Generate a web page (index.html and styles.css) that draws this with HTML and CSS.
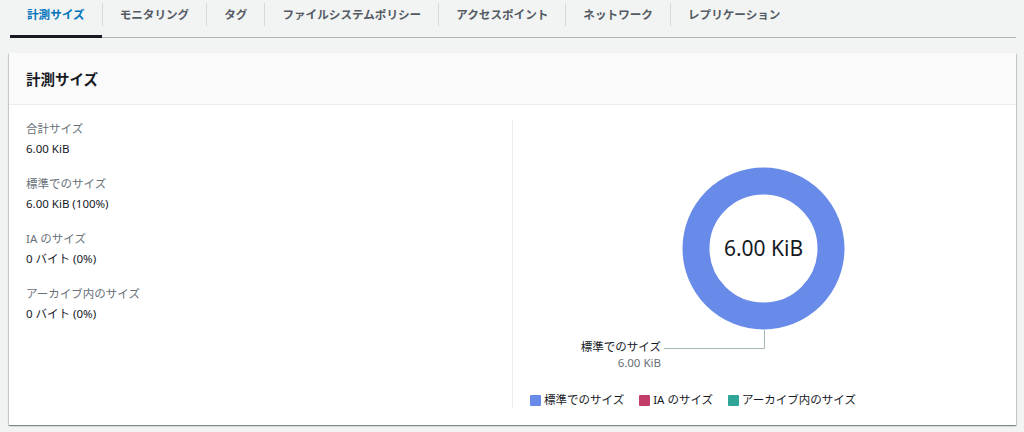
FILE: index.html
```html
<!DOCTYPE html>
<html lang="ja">
<head>
<meta charset="utf-8">
<title>計測サイズ</title>
<link rel="stylesheet" href="styles.css">
</head>
<body>
<div class="page">
  <nav class="tabs">
    <a class="tab active">計測サイズ</a>
    <span class="sep"></span>
    <a class="tab">モニタリング</a>
    <span class="sep"></span>
    <a class="tab">タグ</a>
    <span class="sep"></span>
    <a class="tab">ファイルシステムポリシー</a>
    <span class="sep"></span>
    <a class="tab">アクセスポイント</a>
    <span class="sep"></span>
    <a class="tab">ネットワーク</a>
    <span class="sep"></span>
    <a class="tab">レプリケーション</a>
  </nav>

  <section class="card">
    <header class="card-header"><h2>計測サイズ</h2></header>
    <div class="card-body">
      <div class="stats">
        <div class="stat">
          <div class="label">合計サイズ</div>
          <div class="value">6.00 KiB</div>
        </div>
        <div class="stat">
          <div class="label">標準でのサイズ</div>
          <div class="value">6.00 KiB (100%)</div>
        </div>
        <div class="stat">
          <div class="label">IA のサイズ</div>
          <div class="value">0 バイト (0%)</div>
        </div>
        <div class="stat">
          <div class="label">アーカイブ内のサイズ</div>
          <div class="value">0 バイト (0%)</div>
        </div>
      </div>
      <div class="chart">
        <svg class="donut" width="502" height="256" viewBox="0 0 502 256">
          <circle cx="250.5" cy="128.5" r="67.5" fill="none" stroke="#688ae8" stroke-width="27"/>
          <text x="250.5" y="136" text-anchor="middle" class="center-text">6.00 KiB</text>
          <path d="M251.5 210 V228.5 H151" fill="none" stroke="#aab7b8" stroke-width="1"/>
          <text x="148" y="231" text-anchor="end" class="lbl-title">標準でのサイズ</text>
          <text x="148" y="247" text-anchor="end" class="lbl-value">6.00 KiB</text>
        </svg>
        <ul class="legend">
          <li><span class="swatch std"></span>標準でのサイズ</li>
          <li><span class="swatch ia"></span>IA のサイズ</li>
          <li><span class="swatch arc"></span>アーカイブ内のサイズ</li>
        </ul>
      </div>
    </div>
  </section>
</div>
</body>
</html>
```

FILE: styles.css
```css
html, body {
  margin: 0;
  padding: 0;
  background: #f2f3f3;
  font-family: "Noto Sans", "Noto Sans CJK JP", sans-serif;
  color: #16191f;
}

.page {
  width: 1024px;
  height: 432px;
  overflow: hidden;
}

.tabs {
  display: flex;
  margin: 0 8px 0 10px;
  height: 37px;
  border-bottom: 1px solid #aab7b8;
}

.tab {
  box-sizing: border-box;
  height: 37px;
  padding: 6px 17px 0;
  font-size: 11.6px;
  line-height: 18px;
  font-weight: 700;
  color: #545b64;
  white-space: nowrap;
}

.tab.active {
  color: #0073bb;
  border-bottom: 3px solid #16191f;
  height: 38px;
  margin-bottom: -1px;
}

.sep {
  width: 1px;
  height: 23px;
  margin-top: 3px;
  background: #d5dbdb;
  flex: none;
}

.card {
  margin: 15px 8px 0 9px;
  height: 372px;
  background: #fff;
  box-shadow: 0 1px 1px 0 rgba(0, 28, 36, 0.3), 1px 1px 1px 0 rgba(0, 28, 36, 0.15), -1px 1px 1px 0 rgba(0, 28, 36, 0.15);
  display: flex;
  flex-direction: column;
}

.card-header {
  height: 51px;
  background: #fafafa;
  border-bottom: 1px solid #eaeded;
  padding: 0 17px;
  display: flex;
  align-items: center;
}

.card-header h2 {
  margin: 0;
  font-size: 14.5px;
  line-height: 20px;
  font-weight: 700;
  color: #16191f;
}

.card-body {
  flex: 1;
  display: grid;
  grid-template-columns: 503px 1fr;
}

.stats {
  padding: 15px 17px 0;
  display: flex;
  flex-direction: column;
  gap: 17px;
}

.stat .label {
  font-size: 11.5px;
  line-height: 18px;
  margin-bottom: 2px;
  color: #687078;
}

.stat .value {
  font-size: 11.5px;
  line-height: 18px;
  color: #16191f;
}

.chart {
  margin: 15px 0 17px;
  border-left: 1px solid #eaeded;
  display: flex;
  flex-direction: column;
}

.donut {
  display: block;
}

.center-text {
  font-family: "Noto Sans", sans-serif;
  font-size: 21px;
  fill: #16191f;
}

.lbl-title {
  font-size: 11.5px;
  fill: #16191f;
}

.lbl-value {
  font-size: 11.5px;
  fill: #687078;
}

.legend {
  list-style: none;
  margin: 17px 0 0 17px;
  padding: 0;
  display: flex;
  gap: 15px;
  font-size: 11.5px;
  line-height: 14px;
  color: #16191f;
}

.legend li {
  display: flex;
  align-items: center;
  gap: 3px;
}

.swatch {
  width: 11px;
  height: 11px;
  border-radius: 1px;
  flex: none;
}

.swatch.std { background: #688ae8; }
.swatch.ia { background: #c33d69; }
.swatch.arc { background: #2ea597; }
```
